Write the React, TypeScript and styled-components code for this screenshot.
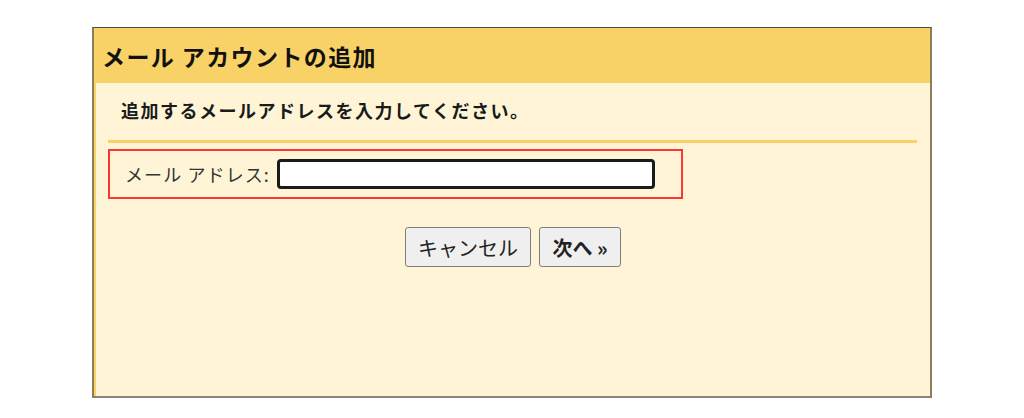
import React from "react";
import styled, { createGlobalStyle } from "styled-components";

const Global = createGlobalStyle`
  html, body { margin: 0; padding: 0; background: #ffffff; }
  body { font-family: "Noto Sans CJK JP", "Noto Sans", sans-serif; color: #1a1a1a; }
`;

const Page = styled.div`
  width: 1024px;
  height: 418px;
  padding: 27px 0 0 92px;
  box-sizing: border-box;
`;

const Panel = styled.div`
  width: 840px;
  height: 371px;
  box-sizing: border-box;
  border-top: 1px solid #4a4a4a;
  border-left: 2px solid #8c7d5c;
  border-right: 2px solid #8c7d5c;
  border-bottom: 2px solid #8a8470;
  background: #fff5d6;
  display: flex;
  flex-direction: column;
`;

const Header = styled.div`
  height: 55px;
  background: #f9d267;
  display: flex;
  align-items: center;
  padding-left: 8px;
  font-size: 23px;
  font-weight: 700;
  letter-spacing: 1.4px;
  color: #111;
`;

const Body = styled.div`
  flex: 1;
  border-left: 2px solid #f9d267;
  padding: 0 13px 0 12px;
  display: flex;
  flex-direction: column;
`;

const Intro = styled.div`
  font-size: 18px;
  font-weight: 700;
  letter-spacing: 1.5px;
  padding: 14px 0 0 13px;
  height: 30px;
  line-height: 26px;
`;

const Rule = styled.div`
  height: 3px;
  background: #f9d267;
  margin-top: 13px;
`;

const FieldBox = styled.div`
  margin-top: 6px;
  width: 575px;
  height: 50px;
  box-sizing: border-box;
  border: 2px solid #ff3535;
  display: flex;
  align-items: center;
  padding-left: 15px;
  gap: 7px;
`;

const Label = styled.label`
  font-size: 18px;
  letter-spacing: 1.1px;
  color: #333;
`;

const Input = styled.input`
  width: 378px;
  height: 30px;
  box-sizing: border-box;
  border: 3px solid #1b1b1b;
  border-radius: 4px;
  background: #fff;
  outline: none;
`;

const Actions = styled.div`
  display: flex;
  justify-content: center;
  gap: 8px;
  margin-top: 28px;
  padding-left: 1px;
`;

const Button = styled.button<{ $bold?: boolean; $w: number }>`
  width: ${(p) => p.$w}px;
  height: 40px;
  box-sizing: border-box;
  border: 1px solid #7d7d7d;
  border-radius: 3px;
  background: #efefef;
  font-family: "Noto Sans CJK JP", "Noto Sans", sans-serif;
  font-size: 20px;
  font-weight: ${(p) => (p.$bold ? 700 : 400)};
  color: #222;
  padding: 0;
`;

export default function App() {
  return (
    <Page>
      <Global />
      <Panel>
        <Header>メール アカウントの追加</Header>
        <Body>
          <Intro>追加するメールアドレスを入力してください。</Intro>
          <Rule />
          <FieldBox>
            <Label htmlFor="addr">メール アドレス:</Label>
            <Input id="addr" type="text" />
          </FieldBox>
          <Actions>
            <Button $w={126}>キャンセル</Button>
            <Button $w={82} $bold>次へ »</Button>
          </Actions>
        </Body>
      </Panel>
    </Page>
  );
}
